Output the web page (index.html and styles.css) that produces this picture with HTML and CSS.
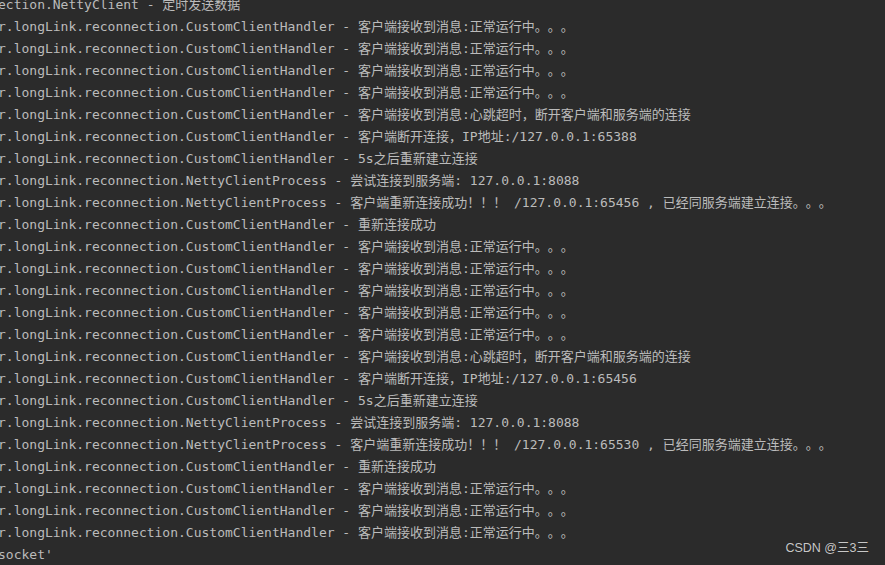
FILE: index.html
```html
<!DOCTYPE html>
<html lang="zh-CN">
<head>
<meta charset="utf-8">
<title>Console</title>
<link rel="stylesheet" href="styles.css">
</head>
<body>
<div class="console">
<pre class="log">ection.NettyClient - 定时发送数据
r.longLink.reconnection.CustomClientHandler - 客户端接收到消息:正常运行中。。。
r.longLink.reconnection.CustomClientHandler - 客户端接收到消息:正常运行中。。。
r.longLink.reconnection.CustomClientHandler - 客户端接收到消息:正常运行中。。。
r.longLink.reconnection.CustomClientHandler - 客户端接收到消息:正常运行中。。。
r.longLink.reconnection.CustomClientHandler - 客户端接收到消息:心跳超时，断开客户端和服务端的连接
r.longLink.reconnection.CustomClientHandler - 客户端断开连接，IP地址:/127.0.0.1:65388
r.longLink.reconnection.CustomClientHandler - 5s之后重新建立连接
r.longLink.reconnection.NettyClientProcess - 尝试连接到服务端: 127.0.0.1:8088
r.longLink.reconnection.NettyClientProcess - 客户端重新连接成功！！！ /127.0.0.1:65456 , 已经同服务端建立连接。。。
r.longLink.reconnection.CustomClientHandler - 重新连接成功
r.longLink.reconnection.CustomClientHandler - 客户端接收到消息:正常运行中。。。
r.longLink.reconnection.CustomClientHandler - 客户端接收到消息:正常运行中。。。
r.longLink.reconnection.CustomClientHandler - 客户端接收到消息:正常运行中。。。
r.longLink.reconnection.CustomClientHandler - 客户端接收到消息:正常运行中。。。
r.longLink.reconnection.CustomClientHandler - 客户端接收到消息:正常运行中。。。
r.longLink.reconnection.CustomClientHandler - 客户端接收到消息:心跳超时，断开客户端和服务端的连接
r.longLink.reconnection.CustomClientHandler - 客户端断开连接，IP地址:/127.0.0.1:65456
r.longLink.reconnection.CustomClientHandler - 5s之后重新建立连接
r.longLink.reconnection.NettyClientProcess - 尝试连接到服务端: 127.0.0.1:8088
r.longLink.reconnection.NettyClientProcess - 客户端重新连接成功！！！ /127.0.0.1:65530 , 已经同服务端建立连接。。。
r.longLink.reconnection.CustomClientHandler - 重新连接成功
r.longLink.reconnection.CustomClientHandler - 客户端接收到消息:正常运行中。。。
r.longLink.reconnection.CustomClientHandler - 客户端接收到消息:正常运行中。。。
r.longLink.reconnection.CustomClientHandler - 客户端接收到消息:正常运行中。。。
socket'</pre>
<div class="watermark">CSDN @三3三</div>
</div>
</body>
</html>
```
FILE: styles.css
```css
html, body {
  margin: 0;
  padding: 0;
  background: #2b2b2b;
  overflow: hidden;
}
.console {
  position: relative;
  width: 885px;
  height: 565px;
  overflow: hidden;
  background: #2b2b2b;
}
.log {
  margin: -6px 0 0 -2px;
  font-family: "DejaVu Sans Mono", "Noto Sans CJK SC", monospace;
  font-size: 13px;
  line-height: 22px;
  color: #bbbbbb;
  white-space: pre;
  text-spacing-trim: space-all;
  font-feature-settings: "halt" 0, "chws" 0;
}
.watermark {
  position: absolute;
  right: 16px;
  bottom: 9px;
  font-family: "Liberation Sans", "Noto Sans CJK SC", sans-serif;
  font-size: 12.5px;
  color: #c8c8c8;
  text-shadow: 0 0 1px rgba(0,0,0,0.4);
}
```
